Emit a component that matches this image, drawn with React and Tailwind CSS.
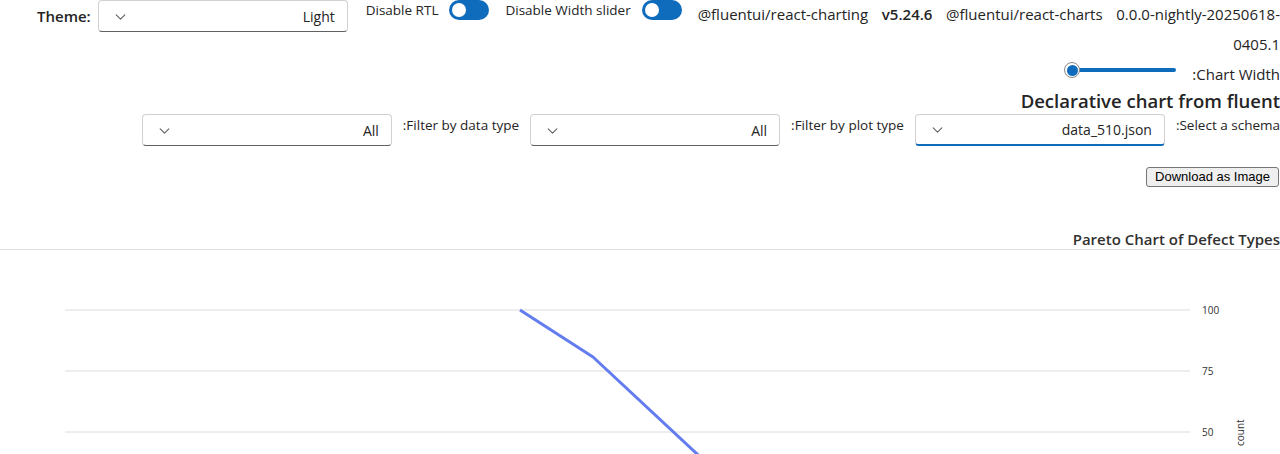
import React from 'react';

function Chevron() {
  return (
    <svg width="13" height="13" viewBox="0 0 12 12" fill="none">
      <path d="M2 4.5L6 8.5L10 4.5" stroke="#616161" strokeWidth="1" strokeLinecap="round" strokeLinejoin="round" />
    </svg>
  );
}

function Dropdown({ value, focused }) {
  return (
    <div
      className={`w-[250px] h-[32px] shrink-0 flex items-center justify-between pl-[15px] pr-[12px] bg-white rounded-[4px] border border-[#d1d1d1] ${
        focused ? 'border-b-2 border-b-[#0f6cbd]' : 'border-b-[#616161]'
      }`}
    >
      <Chevron />
      <span className="text-[14px] text-[#242424]">{value}</span>
    </div>
  );
}

function Toggle() {
  return (
    <div className="w-[40px] h-[20px] shrink-0 rounded-full bg-[#0f6cbd] flex items-center px-[3px]">
      <div className="w-[14px] h-[14px] rounded-full bg-white" />
    </div>
  );
}

function Slider() {
  return (
    <div className="relative w-[112px] h-[20px] flex items-center">
      <div className="ml-[8px] w-[104px] h-[4px] rounded-full bg-[#0f6cbd]" />
      <div className="absolute left-0 top-[2px] w-[16px] h-[16px] rounded-full bg-white border border-[#8a8a8a] flex items-center justify-center">
        <div className="w-[11px] h-[11px] rounded-full bg-[#0f6cbd]" />
      </div>
    </div>
  );
}

function ParetoChart() {
  const grid = [
    { y: 60, label: '100' },
    { y: 121, label: '75' },
    { y: 182, label: '50' },
  ];
  return (
    <svg width="1280" height="205" className="block">
      {grid.map((g) => (
        <g key={g.label}>
          <line x1="65" x2="1190" y1={g.y} y2={g.y} stroke="#dcdcdc" strokeWidth="1" />
          <text x="1202" y={g.y + 3.5} fontSize="10" fill="#323130" fontFamily="'Open Sans', sans-serif">
            {g.label}
          </text>
        </g>
      ))}
      <text
        x="0"
        y="0"
        fontSize="10"
        fill="#323130"
        fontFamily="'Open Sans', sans-serif"
        transform="translate(1244 196) rotate(-90)"
      >
        count
      </text>
      <polyline
        points="520,60 593,107 740,244"
        fill="none"
        stroke="#637cef"
        strokeWidth="3"
        strokeLinejoin="round"
      />
    </svg>
  );
}

export default function App() {
  return (
    <div className="w-[1280px] h-[454px] overflow-hidden bg-white text-[#242424] font-['Segoe_UI','Open_Sans',sans-serif] text-[14px]">
      {/* Top controls */}
      <div className="flex items-start">
        <div className="flex items-center h-[32px] pl-[37px]">
          <span className="font-semibold text-[15px]">Theme:</span>
          <div className="ml-[7px]">
            <Dropdown value="Light" />
          </div>
        </div>
        <div className="flex items-center h-[20px] ml-[18px]">
          <span className="text-[13.5px]">Disable RTL</span>
          <div className="ml-[11px]">
            <Toggle />
          </div>
          <span className="ml-[16px] text-[13.5px]">Disable Width slider</span>
          <div className="ml-[11px]">
            <Toggle />
          </div>
        </div>
        <div className="flex-1 ml-[16px] text-right text-[15px]">
          <div className="flex justify-between leading-[28px] whitespace-nowrap">
            <span>@fluentui/react-charting</span>
            <span className="font-semibold">v5.24.6</span>
            <span>@fluentui/react-charts</span>
            <span>0.0.0-nightly-20250618-</span>
          </div>
          <div className="mt-[2px] leading-[28px]">0405.1</div>
        </div>
      </div>

      {/* Chart width slider */}
      <div className="flex justify-end items-center h-[24px] mt-[2px]">
        <div className="-mt-[4px]">
          <Slider />
        </div>
        <span className="ml-[16px] mt-[4px] text-[15px]">:Chart Width</span>
      </div>

      {/* Title */}
      <div className="mt-[4px] text-right text-[18.5px] font-semibold leading-[26px]">
        Declarative chart from fluent
      </div>

      {/* Filters */}
      <div className="flex justify-end items-start gap-[11px]">
        <Dropdown value="All" />
        <span className="mt-[1px] leading-[20px] text-[13.5px]">:Filter by data type</span>
        <Dropdown value="All" />
        <span className="mt-[1px] leading-[20px] text-[13.5px]">:Filter by plot type</span>
        <Dropdown value="data_510.json" focused />
        <span className="mt-[1px] leading-[20px] text-[13.5px]">:Select a schema</span>
      </div>

      {/* Download */}
      <div className="flex justify-end mt-[21px] pr-[1px]">
        <button className="h-[20px] px-[8px] text-[13px] leading-[18px] text-black bg-[#efefef] border border-[#767676] rounded-[3px] font-['Liberation_Sans',sans-serif]">
          Download as Image
        </button>
      </div>

      {/* Chart */}
      <div className="mt-[42px] text-right text-[15px] font-semibold text-[#323130] leading-[20px]">
        Pareto Chart of Defect Types
      </div>
      <div className="border-t border-[#e0e0e0]">
        <ParetoChart />
      </div>
    </div>
  );
}
